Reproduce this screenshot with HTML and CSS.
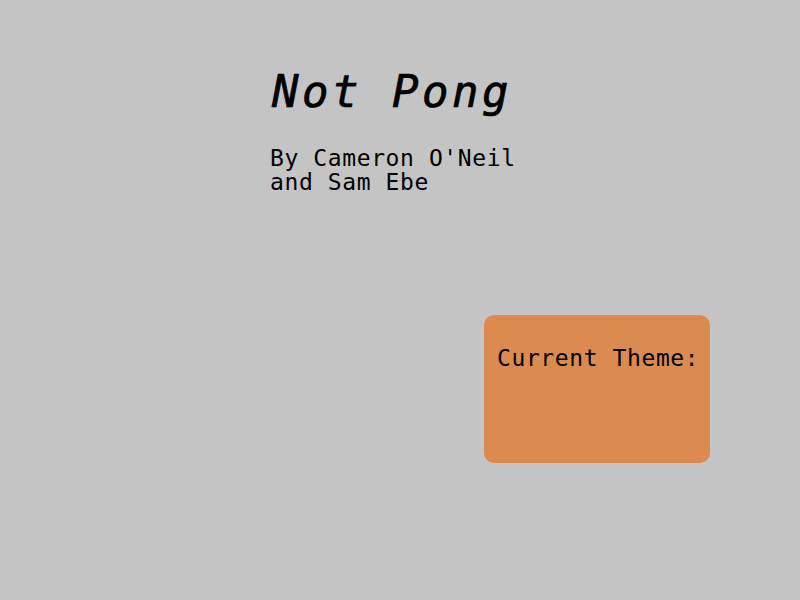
FILE: index.html
```html
<!DOCTYPE html>
<html>
<head>
<meta charset="utf-8">
<title>Not Pong</title>
<link rel="stylesheet" href="styles.css">
</head>
<body>
<main class="menu">
  <h1 class="title">Not Pong</h1>
  <p class="credits">By Cameron O'Neil and Sam Ebe</p>
  <section class="theme-card">
    <p class="theme-label">Current Theme:</p>
  </section>
</main>
</body>
</html>
```
FILE: styles.css
```css
html, body {
  margin: 0;
  padding: 0;
  background: #c4c4c4;
  width: 800px;
  height: 600px;
  overflow: hidden;
}

.menu {
  display: flex;
  flex-direction: column;
  align-items: flex-start;
  padding: 66px 0 0 270px;
  font-family: "DejaVu Sans Mono", monospace;
  color: #000;
}

.title {
  margin: 0 0 0 2px;
  font-size: 44px;
  font-weight: normal;
  font-style: italic;
  letter-spacing: 3.5px;
  line-height: normal;
  -webkit-text-stroke: 0.7px #000;
}

.credits {
  margin: 29px 0 0 0;
  width: 260px;
  font-size: 23px;
  line-height: 24px;
  letter-spacing: 0.6px;
}

.theme-card {
  margin: 121px 0 0 214px;
  width: 226px;
  height: 148px;
  box-sizing: border-box;
  padding: 30px 0 0 13px;
  background: #db8b50;
  border-radius: 10px;
}

.theme-label {
  margin: 0;
  font-size: 23px;
  line-height: normal;
  letter-spacing: 0.6px;
  white-space: nowrap;
}
```
